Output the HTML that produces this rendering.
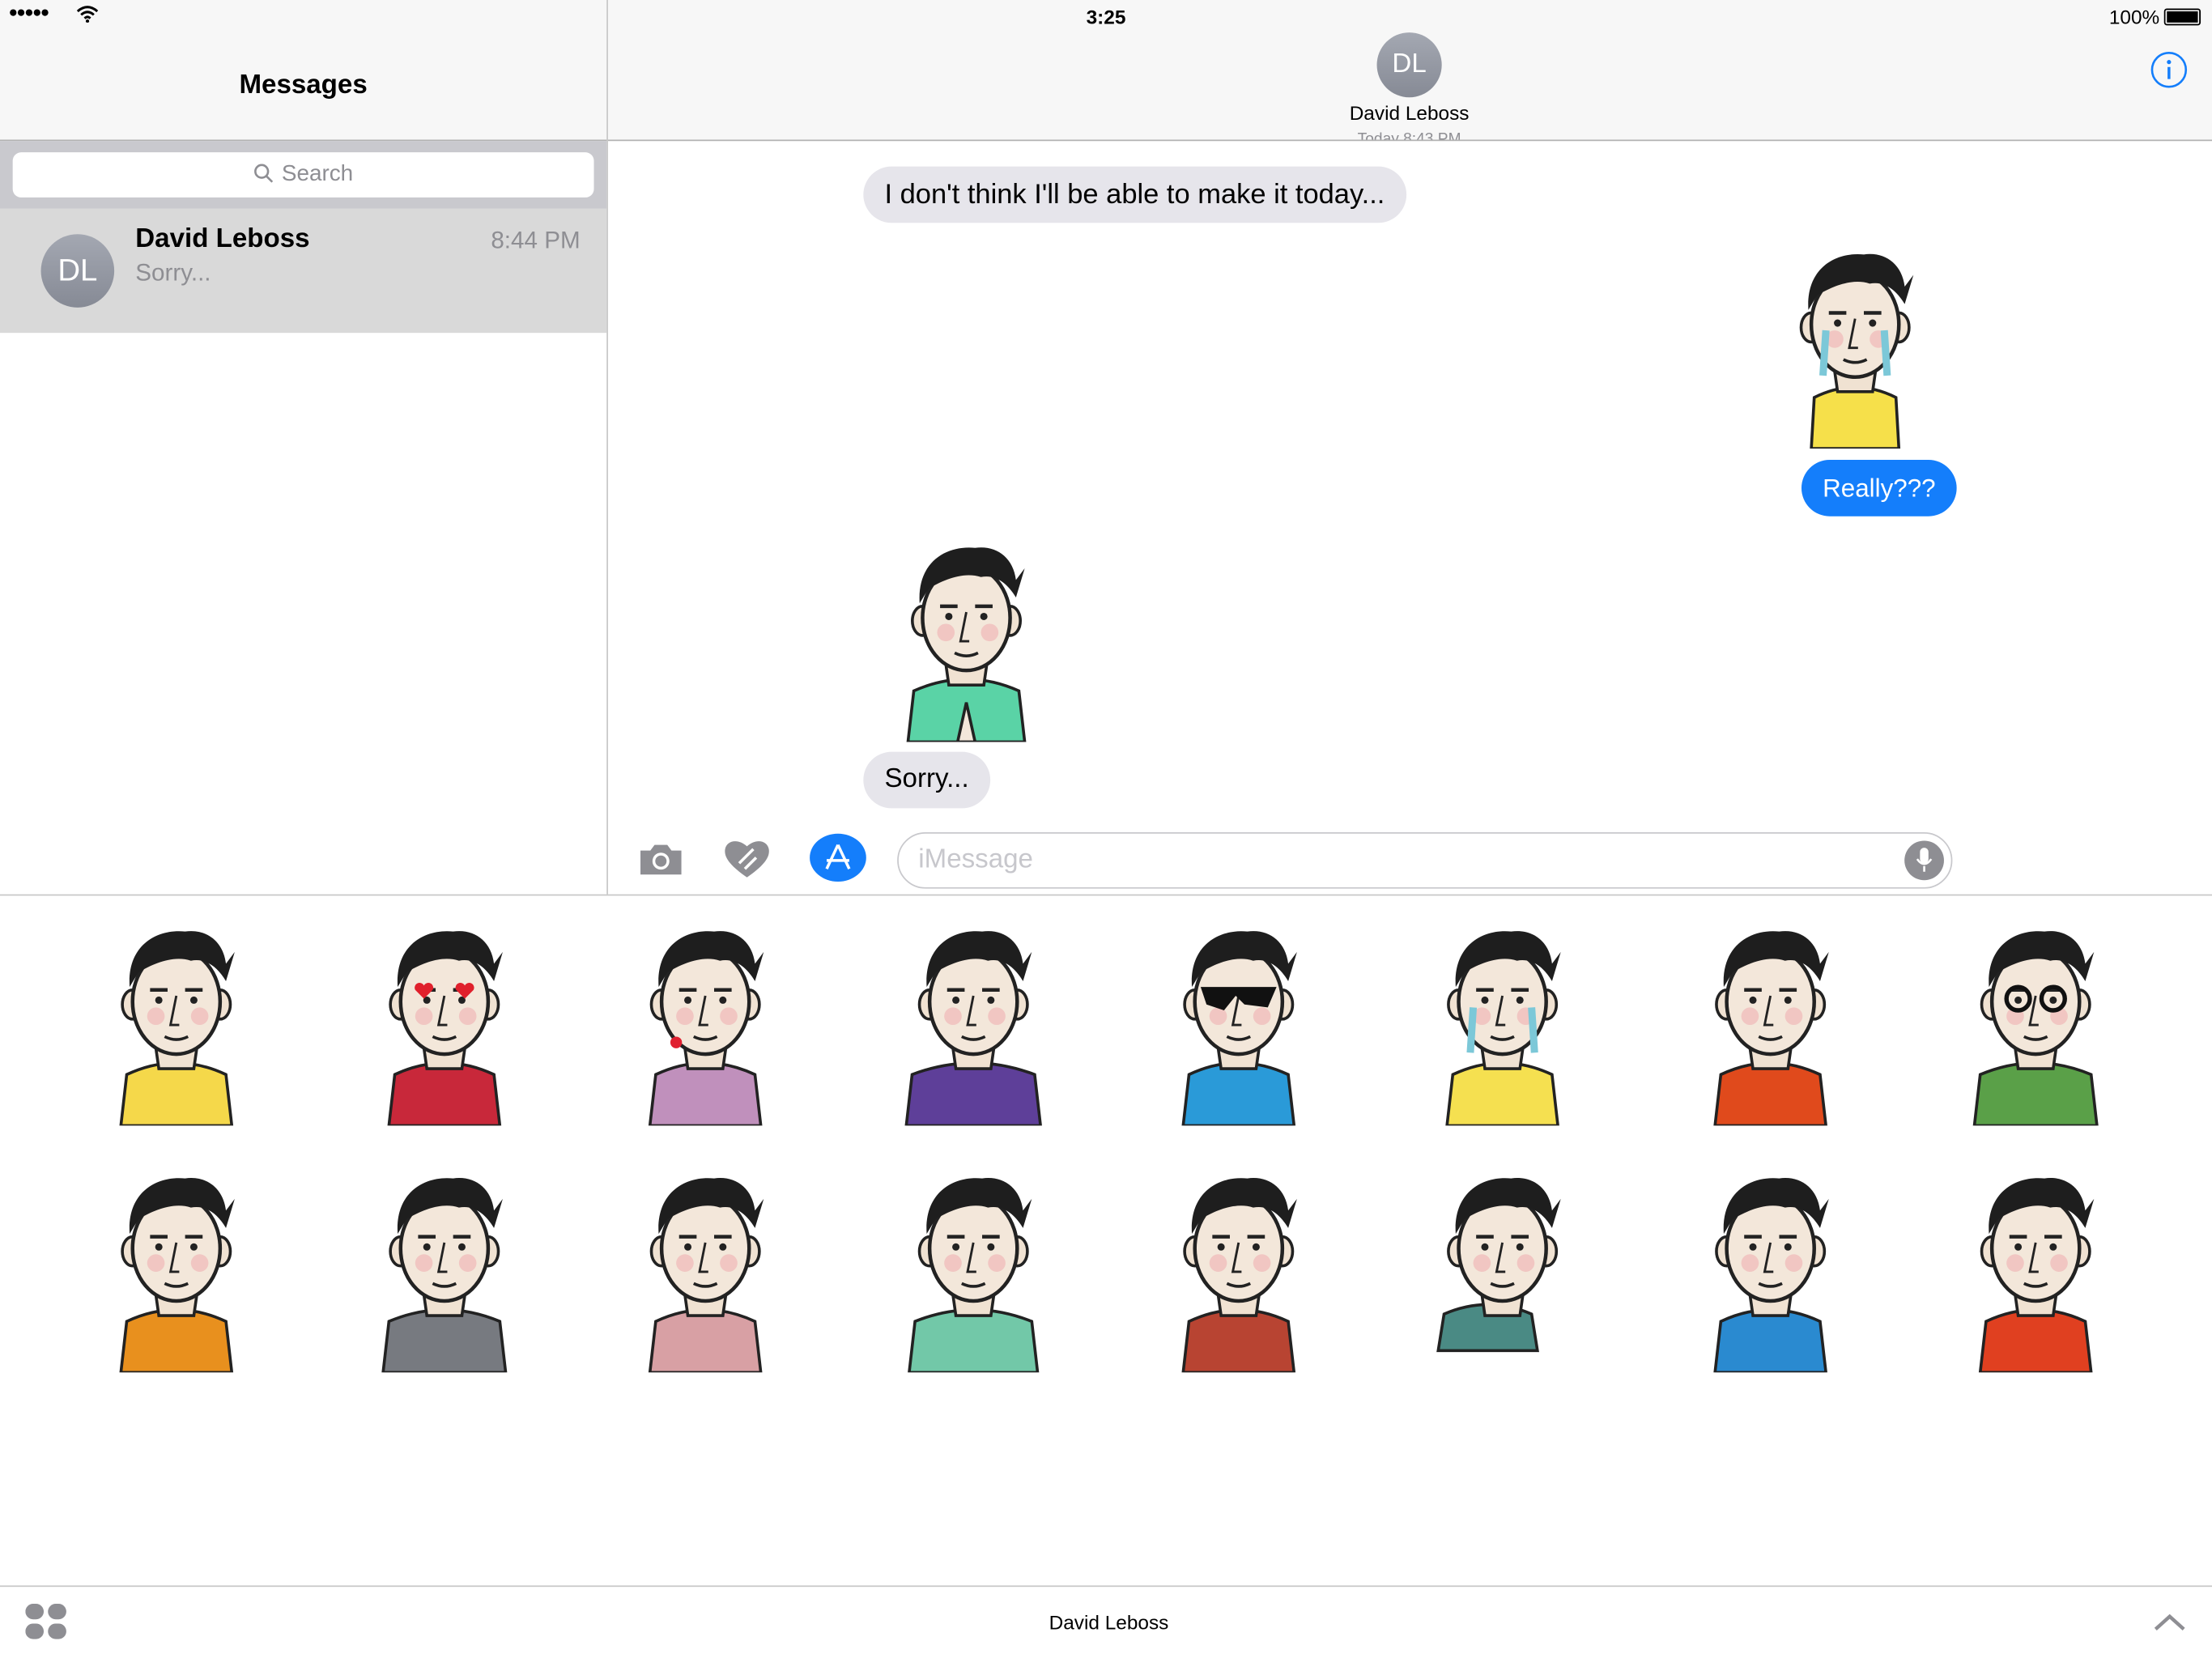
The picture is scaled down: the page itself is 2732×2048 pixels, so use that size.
<!DOCTYPE html>
<html><head><meta charset="utf-8">
<style>
html,body{margin:0;padding:0;width:2732px;height:2048px;overflow:hidden;background:#fff}
#w{position:absolute;left:0;top:0;width:1568px;height:1175px;transform:scale(1.74235);transform-origin:0 0;font-family:"Liberation Sans",sans-serif;color:#000}
.a{position:absolute}
.bub{position:absolute;border-radius:20px;font-size:19px;line-height:40px;padding:0 15px;white-space:nowrap}
.g{background:#e6e5eb;color:#000}
.st{position:absolute;width:120px;height:150px}
</style></head><body>
<div id="w">
<svg width="0" height="0" style="position:absolute">
<defs>
<symbol id="face" viewBox="0 0 100 145">
<path d="M36 92 L38 106 L62 106 L64 92 Z" fill="#f0e2d2" stroke="#222" stroke-width="2"/>
<ellipse cx="20" cy="62" rx="7" ry="10" fill="#f0e2d2" stroke="#222" stroke-width="2"/>
<ellipse cx="80" cy="62" rx="7" ry="10" fill="#f0e2d2" stroke="#222" stroke-width="2"/>
<ellipse cx="50" cy="60" rx="30" ry="36" fill="#f3e7da" stroke="#222" stroke-width="2.5"/>
<path d="M18 50 C16 22 36 10 56 12 C70 10 82 18 84 34 L90 26 L84 46 C78 36 70 30 60 32 C48 28 34 34 24 40 Z" fill="#1e1e1e"/>
<circle cx="36" cy="70" r="6" fill="#f0b8b8" opacity=".7"/>
<circle cx="66" cy="70" r="6" fill="#f0b8b8" opacity=".7"/>
<path d="M32 52 h12 M56 52 h12" stroke="#222" stroke-width="2.5"/>
<circle cx="38" cy="59" r="2.5" fill="#222"/><circle cx="62" cy="59" r="2.5" fill="#222"/>
<path d="M50 56 L46 76 L52 76" fill="none" stroke="#222" stroke-width="1.6"/>
<path d="M42 84 Q50 88 58 84" fill="none" stroke="#222" stroke-width="2"/>
</symbol>
</defs>
</svg>

<div class="a" style="left:6px;top:3px;font-size:11px;letter-spacing:-1px">●●●●●</div>
<svg class="a" style="left:54px;top:4px" width="16" height="12" viewBox="0 0 16 12"><path d="M1 4 Q8 -2 15 4 M3.5 6.5 Q8 2.5 12.5 6.5 M6 9 Q8 7 10 9" fill="none" stroke="#000" stroke-width="1.7"/><circle cx="8" cy="11" r="1.2"/></svg>
<div class="a" style="left:0;width:1568px;top:4px;text-align:center;font-size:14px;font-weight:bold">3:25</div>
<div class="a" style="left:1495px;top:4px;font-size:14px">100%</div>
<div class="a" style="left:1534px;top:6px;width:24px;height:10px;border:1px solid #000;border-radius:2px;background:#000;box-shadow:inset 0 0 0 1px #fff"></div>

<div class="a" style="left:0;top:0;width:430px;height:99px;background:#f7f7f7;z-index:-1"></div>
<div class="a" style="left:430px;top:0;width:1138px;height:99px;background:#f7f7f7;z-index:-1"></div>
<div class="a" style="left:0;top:99px;width:1568px;height:1px;background:#b2b2b2"></div>
<div class="a" style="left:0;width:430px;top:50px;text-align:center;font-size:19px;font-weight:600">Messages</div>
<div class="a" style="left:0;top:100px;width:430px;height:48px;background:#c9c9ce"></div>
<div class="a" style="left:9px;top:108px;width:412px;height:32px;background:#fff;border-radius:6px;color:#8e8e93;font-size:16px;line-height:32px;text-align:center">
<svg width="14" height="14" viewBox="0 0 14 14" style="vertical-align:-2px;margin-right:6px"><circle cx="5.5" cy="5.5" r="4.5" fill="none" stroke="#8e8e93" stroke-width="1.5"/><path d="M9 9 L13 13" stroke="#8e8e93" stroke-width="1.5"/></svg>Search</div>
<div class="a" style="left:0;top:148px;width:430px;height:88px;background:#d9d9d9"></div>
<div class="a" style="left:29px;top:166px;width:52px;height:52px;border-radius:50%;background:linear-gradient(#a4a8b2,#868a95);color:#fff;font-size:22px;line-height:52px;text-align:center">DL</div>
<div class="a" style="left:96px;top:159px;font-size:19px;font-weight:600">David Leboss</div>
<div class="a" style="left:96px;top:184px;font-size:17px;color:#8e8e93">Sorry...</div>
<div class="a" style="left:348px;top:161px;font-size:17px;color:#8e8e93">8:44 PM</div>
<div class="a" style="left:430px;top:0;width:1px;height:634px;background:#c8c8c8"></div>

<div class="a" style="left:976px;top:23px;width:46px;height:46px;border-radius:50%;background:linear-gradient(#a4a8b2,#868a95);color:#fff;font-size:19px;line-height:46px;text-align:center">DL</div>
<div class="a" style="left:899px;width:200px;top:72px;text-align:center;font-size:14px">David Leboss</div>
<div class="a" style="left:899px;width:200px;top:93px;text-align:center;font-size:11px;color:#8e8e93;height:6px;overflow:hidden">Today 8:43 PM</div>
<svg class="a" style="left:1524px;top:36px" width="27" height="27" viewBox="0 0 27 27"><circle cx="13.5" cy="13.5" r="12" fill="none" stroke="#147efb" stroke-width="1.5"/><circle cx="13.5" cy="8" r="1.5" fill="#147efb"/><path d="M13.5 11.5 V20" stroke="#147efb" stroke-width="2"/></svg>

<div class="bub g" style="left:612px;top:118px;font-size:19.8px">I don't think I'll be able to make it today...</div>
<div class="bub" style="left:1277px;top:326px;background:#147efb;color:#fff;font-size:18px">Really???</div>
<div class="bub g" style="left:612px;top:533px">Sorry...</div>

<svg class="st" style="left:1255px;top:168px" viewBox="0 0 100 145"><path d="M20 145 L22 110 Q50 96 78 110 L80 145 Z" fill="#f6e04a" stroke="#222" stroke-width="2"/><use href="#face"/><path d="M30 64 L28 95 M70 64 L72 95" stroke="#7cc8d8" stroke-width="5"/></svg>
<svg class="st" style="left:625px;top:376px" viewBox="0 0 100 145"><path d="M10 145 L14 110 Q50 94 86 110 L90 145 Z" fill="#5ad3a6" stroke="#222" stroke-width="2"/><use href="#face"/><path d="M44 145 L50 118 L56 145 Z" fill="#f3e7da" stroke="#222" stroke-width="2"/></svg>

<svg class="a" style="left:452px;top:596px" width="33" height="26" viewBox="0 0 33 26"><path d="M2 7 H9 L12 3 H21 L24 7 H31 V24 H2 Z" fill="#8e8e93"/><circle cx="16.5" cy="14.5" r="6" fill="#fff"/><circle cx="16.5" cy="14.5" r="4" fill="#8e8e93"/></svg>
<svg class="a" style="left:512px;top:594px" width="35" height="30" viewBox="0 0 35 30"><path d="M17.5 28 C6 20 1 14 2 8 C3 2 11 0 17.5 6 C24 0 32 2 33 8 C34 14 29 20 17.5 28 Z" fill="#8e8e93"/><path d="M12 18 L22 8 M16 22 L24 14" stroke="#fff" stroke-width="2"/></svg>
<div class="a" style="left:574px;top:591px;width:40px;height:34px;border-radius:50%;background:#147efb"></div>
<svg class="a" style="left:582px;top:596px" width="24" height="24" viewBox="0 0 24 24"><path d="M12 3 L4 20 M12 3 L20 20 M4 14 H20" fill="none" stroke="#fff" stroke-width="2"/></svg>
<div class="a" style="left:636px;top:590px;width:746px;height:38px;border:1px solid #c8c8cc;border-radius:20px;color:#c7c7cc;font-size:19px;line-height:38px;text-indent:14px">iMessage</div>
<div class="a" style="left:1350px;top:596px;width:28px;height:28px;border-radius:50%;background:#8e8e93"></div>
<svg class="a" style="left:1358px;top:600px" width="12" height="20" viewBox="0 0 12 20"><rect x="3" y="1" width="6" height="11" rx="3" fill="#fff"/><path d="M1 9 Q6 16 11 9 M6 14 V18" fill="none" stroke="#fff" stroke-width="1.5"/></svg>
<div class="a" style="left:0;top:634px;width:1568px;height:1px;background:#c8c8c8"></div>

<svg class="st" style="left:65px;top:648px" viewBox="0 0 100 145"><path d="M12 145 L16 110 Q50 94 84 110 L88 145 Z" fill="#f5d84a" stroke="#222" stroke-width="2"/><use href="#face"/></svg>
<svg class="st" style="left:255px;top:648px" viewBox="0 0 100 145"><path d="M12 145 L16 110 Q50 94 84 110 L88 145 Z" fill="#c8283a" stroke="#222" stroke-width="2"/><use href="#face"/><path d="M30 52 l6 6 l6 -6 a3 3 0 0 0 -6 -3 a3 3 0 0 0 -6 3 Z M58 52 l6 6 l6 -6 a3 3 0 0 0 -6 -3 a3 3 0 0 0 -6 3 Z" fill="#e0202c"/></svg>
<svg class="st" style="left:440px;top:648px" viewBox="0 0 100 145"><path d="M12 145 L16 110 Q50 94 84 110 L88 145 Z" fill="#c090bc" stroke="#222" stroke-width="2"/><use href="#face"/><circle cx="30" cy="88" r="4" fill="#e02030"/></svg>
<svg class="st" style="left:630px;top:648px" viewBox="0 0 100 145"><path d="M4 145 L8 110 Q50 94 92 110 L96 145 Z" fill="#5e3f99" stroke="#222" stroke-width="2"/><use href="#face"/></svg>
<svg class="st" style="left:818px;top:648px" viewBox="0 0 100 145"><path d="M12 145 L16 110 Q50 94 84 110 L88 145 Z" fill="#2a9ad8" stroke="#222" stroke-width="2"/><use href="#face"/><path d="M24 50 L76 50 L70 64 L54 62 L48 56 L40 66 L28 62 Z" fill="#111"/></svg>
<svg class="st" style="left:1005px;top:648px" viewBox="0 0 100 145"><path d="M12 145 L16 110 Q50 94 84 110 L88 145 Z" fill="#f5e050" stroke="#222" stroke-width="2"/><use href="#face"/><path d="M30 64 L28 95 M70 64 L72 95" stroke="#7cc8d8" stroke-width="5"/></svg>
<svg class="st" style="left:1195px;top:648px" viewBox="0 0 100 145"><path d="M12 145 L16 110 Q50 94 84 110 L88 145 Z" fill="#e04a1c" stroke="#222" stroke-width="2"/><use href="#face"/></svg>
<svg class="st" style="left:1383px;top:648px" viewBox="0 0 100 145"><path d="M8 145 L12 110 Q50 94 88 110 L92 145 Z" fill="#5aa048" stroke="#222" stroke-width="2"/><use href="#face"/><circle cx="38" cy="58" r="8" fill="none" stroke="#111" stroke-width="3"/><circle cx="62" cy="58" r="8" fill="none" stroke="#111" stroke-width="3"/></svg>

<svg class="st" style="left:65px;top:823px" viewBox="0 0 100 145"><path d="M12 145 L16 110 Q50 94 84 110 L88 145 Z" fill="#e8901e" stroke="#222" stroke-width="2"/><use href="#face"/></svg>
<svg class="st" style="left:255px;top:823px" viewBox="0 0 100 145"><path d="M8 145 L12 110 Q50 94 88 110 L92 145 Z" fill="#777a80" stroke="#222" stroke-width="2"/><use href="#face"/></svg>
<svg class="st" style="left:440px;top:823px" viewBox="0 0 100 145"><path d="M12 145 L16 110 Q50 94 84 110 L88 145 Z" fill="#d8a0a4" stroke="#222" stroke-width="2"/><use href="#face"/></svg>
<svg class="st" style="left:630px;top:823px" viewBox="0 0 100 145"><path d="M6 145 L10 110 Q50 94 90 110 L94 145 Z" fill="#72c8a8" stroke="#222" stroke-width="2"/><use href="#face"/></svg>
<svg class="st" style="left:818px;top:823px" viewBox="0 0 100 145"><path d="M12 145 L16 110 Q50 94 84 110 L88 145 Z" fill="#b84432" stroke="#222" stroke-width="2"/><use href="#face"/></svg>
<svg class="st" style="left:1005px;top:823px" viewBox="0 0 100 145"><path d="M6 130 L10 105 Q40 92 70 105 L74 130 Z" fill="#4a8a84" stroke="#222" stroke-width="2"/><use href="#face"/></svg>
<svg class="st" style="left:1195px;top:823px" viewBox="0 0 100 145"><path d="M12 145 L16 110 Q50 94 84 110 L88 145 Z" fill="#2a8ad0" stroke="#222" stroke-width="2"/><use href="#face"/></svg>
<svg class="st" style="left:1383px;top:823px" viewBox="0 0 100 145"><path d="M12 145 L16 110 Q50 94 84 110 L88 145 Z" fill="#e04020" stroke="#222" stroke-width="2"/><use href="#face"/></svg>

<div class="a" style="left:0;top:1124px;width:1568px;height:1px;background:#c8c8c8"></div>
<svg class="a" style="left:18px;top:1137px" width="30" height="26" viewBox="0 0 30 26"><rect x="0" y="0" width="13" height="11" rx="5.5" fill="#8e8e93"/><rect x="16" y="0" width="13" height="11" rx="5.5" fill="#8e8e93"/><rect x="0" y="14" width="13" height="11" rx="5.5" fill="#8e8e93"/><rect x="16" y="14" width="13" height="11" rx="5.5" fill="#8e8e93"/></svg>
<div class="a" style="left:686px;width:200px;top:1142px;text-align:center;font-size:14px">David Leboss</div>
<svg class="a" style="left:1526px;top:1143px" width="24" height="14" viewBox="0 0 24 14"><path d="M2 12 L12 3 L22 12" fill="none" stroke="#8e8e93" stroke-width="2.5"/></svg>
</div>
</body></html>
